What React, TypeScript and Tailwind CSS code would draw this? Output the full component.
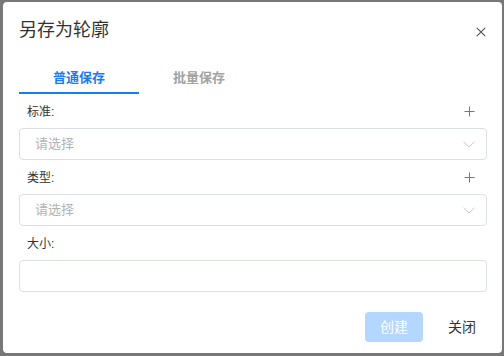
import { useState } from "react";

const font = { fontFamily: '"Liberation Sans", "Noto Sans CJK SC", sans-serif' };

function PlusIcon() {
  return (
    <svg width="11" height="11" viewBox="0 0 11 11" className="text-[#777]">
      <path d="M5.5 0.5V10.5M0.5 5.5H10.5" stroke="currentColor" strokeWidth="1" fill="none" />
    </svg>
  );
}

function ChevronIcon() {
  return (
    <svg width="12" height="7" viewBox="0 0 12 7" className="text-[#c6c8cc]">
      <path d="M0.5 0.8L6 6L11.5 0.8" stroke="currentColor" strokeWidth="1" fill="none" />
    </svg>
  );
}

function FieldLabel({ text, add }: { text: string; add?: boolean }) {
  return (
    <div className="mt-2 flex h-5 items-center justify-between pl-2 pr-3">
      <span className="text-[12px] text-[#333]">{text}</span>
      {add && (
        <span className="-mt-[2px] flex">
          <PlusIcon />
        </span>
      )}
    </div>
  );
}

function SelectBox() {
  return (
    <div className="mt-1.5 flex h-8 items-center justify-between rounded-[4px] border border-[#dcdfe6] bg-white pl-[15px] pr-[11px]">
      <span className="text-[13px] text-[#b0b3b8]">请选择</span>
      <ChevronIcon />
    </div>
  );
}

export default function App() {
  const [tab, setTab] = useState(0);
  const tabs = ["普通保存", "批量保存"];

  return (
    <div className="h-[356px] w-[504px] bg-[#777777] pl-[3px] pt-[2px]" style={font}>
      <div className="flex h-[351px] w-[499px] flex-col rounded-[4px] bg-white pl-4 pr-[15px] pt-4">
        {/* Header */}
        <div className="flex h-6 items-center justify-between">
          <span className="text-[18px] text-[#333]">另存为轮廓</span>
          <button className="mr-[1px] mt-[3px] flex text-[#555]">
            <svg width="10" height="10" viewBox="0 0 10 10">
              <path d="M0.8 0.8L9.2 9.2M9.2 0.8L0.8 9.2" stroke="currentColor" strokeWidth="1.2" fill="none" />
            </svg>
          </button>
        </div>

        {/* Tabs */}
        <div className="mt-[22px] flex">
          {tabs.map((t, i) => (
            <button
              key={t}
              onClick={() => setTab(i)}
              className={
                i === tab
                  ? "flex h-[30px] w-[120px] items-center justify-center border-b-2 border-[#1a7cf2] text-[13px] font-bold text-[#1a7cf2]"
                  : "flex h-[30px] w-[120px] items-center justify-center border-b-2 border-transparent text-[13px] font-bold text-[#a3a3a3]"
              }
            >
              {t}
            </button>
          ))}
        </div>

        {/* Form */}
        <FieldLabel text="标准:" add />
        <SelectBox />
        <FieldLabel text="类型:" add />
        <SelectBox />
        <FieldLabel text="大小:" />
        <input className="mt-1.5 h-8 rounded-[4px] border border-[#dcdfe6] bg-white px-[15px] text-[13px] outline-none" />

        {/* Footer */}
        <div className="mt-5 flex justify-end">
          <button className="h-[30px] rounded-[4px] bg-[#b3d7fe] px-[15px] text-[14px] text-white">创建</button>
          <button className="ml-[14px] h-[30px] px-[11px] text-[14px] text-[#333]">关闭</button>
        </div>
      </div>
    </div>
  );
}
